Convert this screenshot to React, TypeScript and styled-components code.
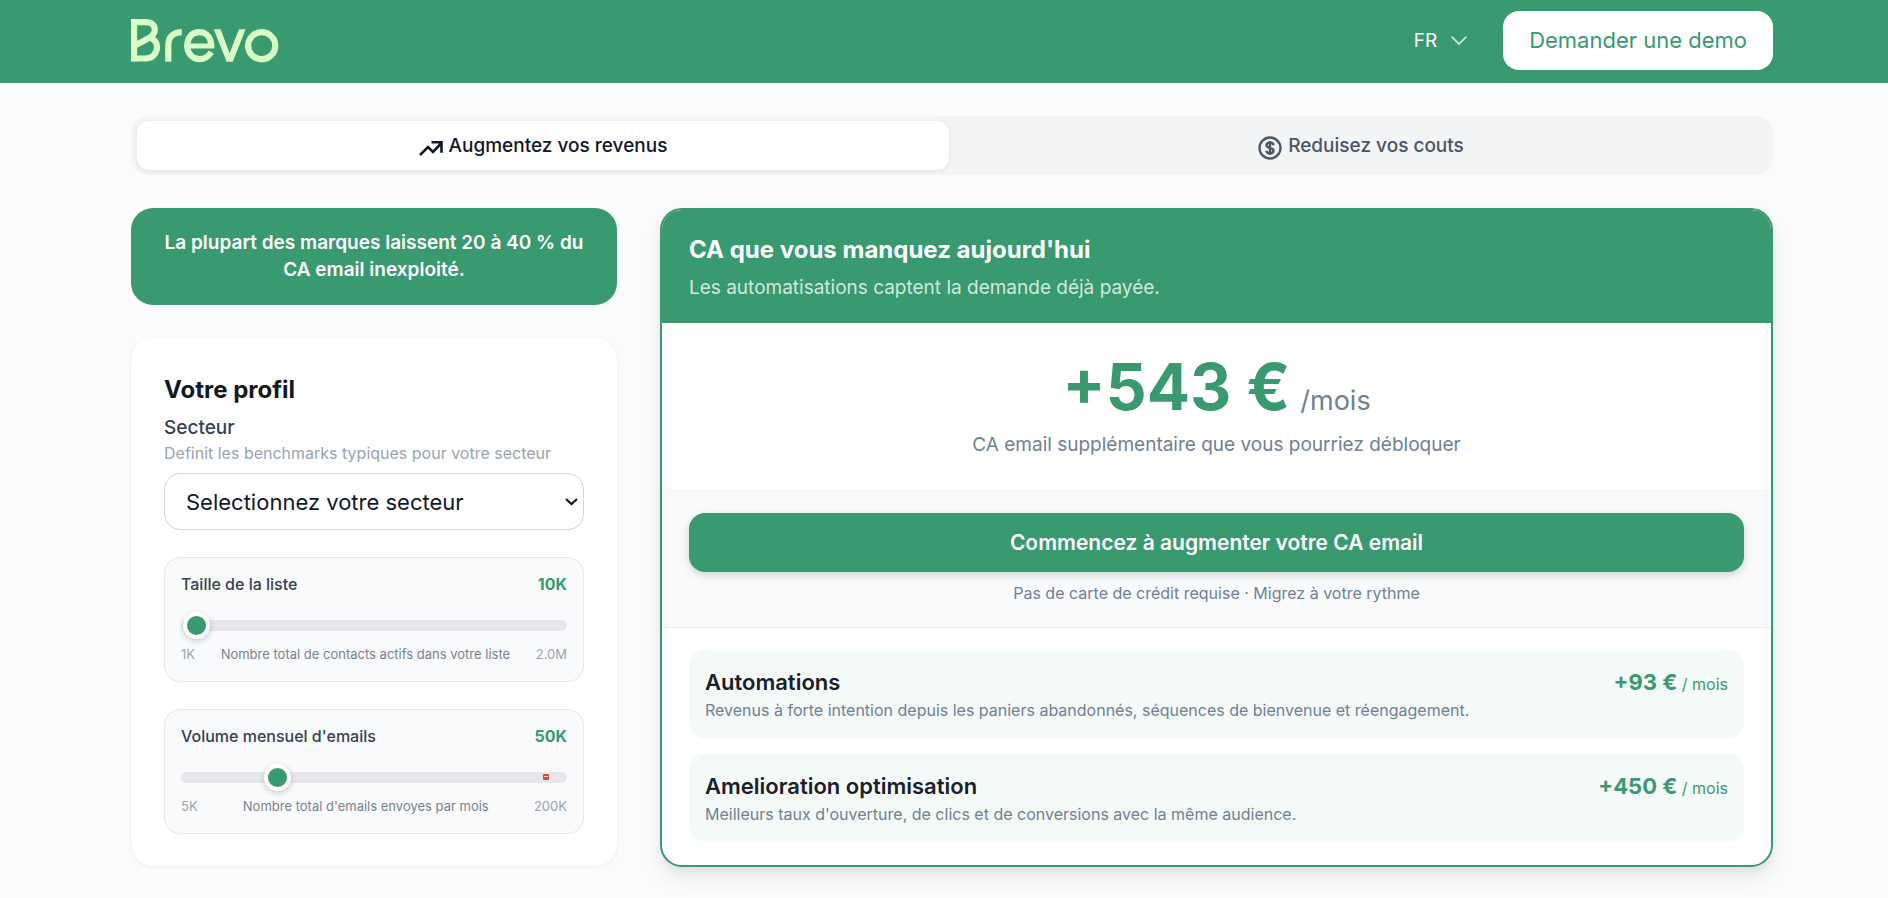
import React, { useState } from "react";
import styled, { createGlobalStyle } from "styled-components";

const green = "#39996f";

const GlobalStyle = createGlobalStyle`
  *, *::before, *::after { box-sizing: border-box; }
  body {
    margin: 0;
    background: #fafbfd;
    color: #111827;
    font-family: Inter, "Liberation Sans", sans-serif;
    font-size: 19px;
    line-height: 28px;
  }
  h1, h2, h3, p { margin: 0; }
  button, select, input { font-family: inherit; }
`;

const Header = styled.header`
  background: ${green};
  padding: 11px 115px 13px 131px;
  display: flex;
  align-items: center;
  justify-content: space-between;
`;

const HomeLink = styled.a`
  display: block;
  line-height: 0;
`;

const HeaderActions = styled.div`
  display: flex;
  align-items: center;
  gap: 36px;
`;

const LanguageButton = styled.button`
  display: flex;
  align-items: center;
  gap: 14px;
  border: 0;
  padding: 0;
  background: none;
  color: #fff;
  font-size: 19px;
  line-height: 28px;
  cursor: pointer;
`;

const DemoButton = styled.button`
  border: 0;
  border-radius: 16px;
  background: #fff;
  color: ${green};
  font-size: 22px;
  font-weight: 400;
  line-height: 31px;
  padding: 14px 26px;
  cursor: pointer;
`;

const Main = styled.main`
  padding: 33px 115px 31px 131px;
  display: grid;
  gap: 33px;
`;

const Tabs = styled.div`
  display: grid;
  grid-template-columns: 1fr 1fr;
  gap: 6px;
  padding: 5px 6px;
  border-radius: 16px;
  background: #f3f4f6;
`;

const Tab = styled.button<{ $active: boolean }>`
  display: flex;
  align-items: center;
  justify-content: center;
  gap: 6px;
  border: 0;
  border-radius: 12px;
  padding: 10px 16px;
  background: ${(p) => (p.$active ? "#fff" : "transparent")};
  box-shadow: ${(p) => (p.$active ? "0 1px 4px rgba(0, 0, 0, 0.08)" : "none")};
  color: ${(p) => (p.$active ? "#111827" : "#4b5563")};
  font-size: 19px;
  font-weight: 500;
  line-height: 29px;
  cursor: pointer;

  svg { margin-top: 4px; }
`;

const Columns = styled.div`
  display: grid;
  grid-template-columns: minmax(0, 486fr) minmax(0, 1113fr);
  gap: 43px;
  align-items: start;
`;

const Sidebar = styled.div`
  display: grid;
  gap: 33px;
`;

const Banner = styled.p`
  border-radius: 22px;
  background: ${green};
  color: #fff;
  padding: 21px 27px 22px;
  text-align: center;
  font-size: 19px;
  font-weight: 600;
  line-height: 27px;
`;

const ProfileCard = styled.section`
  border-radius: 22px;
  background: #fff;
  box-shadow: 0 1px 4px rgba(0, 0, 0, 0.06);
  padding: 34px 33px 32px;
  display: grid;
  gap: 27px;
`;

const Field = styled.div`
  display: flex;
  flex-direction: column;
`;

const ProfileTitle = styled.h2`
  font-size: 24px;
  font-weight: 700;
  line-height: 36px;
`;

const FieldLabel = styled.label`
  color: #374151;
  font-weight: 500;
  line-height: 26px;
  padding-top: 7px;
`;

const Hint = styled.p`
  color: #9ca3af;
  font-size: 16px;
  line-height: 24px;
`;

const SelectBox = styled.div`
  position: relative;
  margin-top: 8px;

  svg {
    position: absolute;
    right: 6px;
    top: 25px;
    pointer-events: none;
  }
`;

const Select = styled.select`
  display: block;
  appearance: none;
  height: 57px;
  width: 100%;
  border: 1px solid #d1d5db;
  border-radius: 16px;
  background: #fff;
  color: #111827;
  font-size: 22px;
  padding: 0 21px;
`;

const SliderCard = styled.div`
  border: 1px solid #e5e7eb;
  border-radius: 16px;
  background: #f9fafb;
  padding: 12px 16px 17px;
  display: grid;
`;

const Line = styled.div`
  display: flex;
  justify-content: space-between;
  align-items: center;
`;

const SliderLabel = styled.label`
  color: #374151;
  font-size: 16px;
  font-weight: 500;
  line-height: 28px;
`;

const SliderValue = styled.output`
  color: ${green};
  font-size: 16px;
  font-weight: 700;
  line-height: 28px;
`;

const Track = styled.div`
  position: relative;
  display: flex;
  margin-top: 14px;
`;

const Range = styled.input`
  appearance: none;
  width: 100%;
  height: 27px;
  margin: 0;
  background: none;

  &::-webkit-slider-runnable-track {
    height: 11px;
    border-radius: 6px;
    background: #e5e7eb;
  }
  &::-webkit-slider-thumb {
    appearance: none;
    width: 27px;
    height: 27px;
    margin-top: -8px;
    border: 4px solid #fff;
    border-radius: 50%;
    background: ${green};
    box-shadow: 0 2px 6px rgba(0, 0, 0, 0.2);
  }
`;

const Marker = styled.svg`
  position: absolute;
  right: 18px;
  top: 10px;
`;

const Scale = styled(Line)`
  color: #9ca3af;
  font-size: 13px;
  line-height: 20px;
  margin-top: 5px;
`;

const ScaleNote = styled.span`
  color: #7b818c;
`;

const ResultCard = styled.section`
  border: 2px solid ${green};
  border-radius: 22px;
  overflow: hidden;
  background: #fff;
  box-shadow: 0 12px 20px rgba(0, 0, 0, 0.07), 0 4px 8px rgba(0, 0, 0, 0.05);
`;

const ResultHeader = styled.div`
  background: ${green};
  color: #fff;
  padding: 21px 27px 17px;
`;

const ResultTitle = styled.h2`
  font-size: 24px;
  font-weight: 700;
  line-height: 38px;
`;

const ResultSubtitle = styled.p`
  color: #cfeadd;
  line-height: 37px;
`;

const Hero = styled.div`
  text-align: center;
  color: #718096;
  padding: 26px 27px 27px;
`;

const Amount = styled.div`
  display: flex;
  align-items: baseline;
  justify-content: center;
  gap: 10px;
`;

const AmountValue = styled.strong`
  color: ${green};
  font-size: 64px;
  font-weight: 700;
  line-height: 76px;
`;

const AmountUnit = styled.span`
  font-size: 27px;
  line-height: 28px;
`;

const HeroNote = styled.p`
  line-height: 36px;
  margin-top: 2px;
`;

const CallToAction = styled.div`
  border-top: 1px solid #f0f2f4;
  border-bottom: 1px solid #e9ecef;
  background: #f9fafb;
  padding: 22px 27px;
  text-align: center;
`;

const CtaButton = styled.button`
  width: 100%;
  border: 0;
  border-radius: 16px;
  background: ${green};
  color: #fff;
  box-shadow: 0 3px 8px rgba(0, 0, 0, 0.16);
  font-size: 21px;
  font-weight: 600;
  line-height: 31px;
  padding: 14px 27px;
  cursor: pointer;
`;

const CtaNote = styled.p`
  color: #718096;
  font-size: 16px;
  line-height: 24px;
  margin-top: 9px;
`;

const Breakdown = styled.div`
  padding: 22px 27px 23px;
  display: grid;
  gap: 16px;
`;

const BreakdownRow = styled.div`
  border-radius: 16px;
  background: #f4faf7;
  padding: 16px;
  display: flex;
  justify-content: space-between;
  align-items: flex-start;
`;

const RowTitle = styled.h3`
  color: #1a202c;
  font-size: 22px;
  font-weight: 600;
  line-height: 32px;
`;

const RowText = styled.p`
  color: #718096;
  font-size: 16px;
  line-height: 24px;
`;

const RowAmount = styled.p`
  color: ${green};
  font-size: 16px;
  line-height: 32px;
  white-space: nowrap;

  strong {
    font-size: 22px;
    font-weight: 700;
  }
`;

const Logo = () => (
  <svg width="148" height="44" viewBox="0 0 148 44" fill="none" stroke="#d9ffc4" strokeWidth="6.200" role="img" aria-label="Brevo">
    <path d="M3.100 42.500V3.200h12c6 0 8.700 3.500 8.700 7.600 0 5-4 7.700-9 9.900L3.100 27" />
    <path d="M19 18.500c4.500 2 7 5 7 9.300 0 6.500-4.500 11.700-11.500 11.700H3.100" />
    <path d="M37.300 42.700V26c0-8 5-12.800 13.500-12.800" />
    <path d="M56 27h27.300" strokeWidth="5" />
    <path d="M80.300 28c0-9-4.500-14.900-12-14.900S56.200 19 56.200 26.600 61.500 40.200 68.500 40.200c5 0 9-2.600 11.700-7.200" />
    <path d="M82.800 10.300h6.700l9.200 24 9.200-24h6.700L101.800 42.800h-6.200z" fill="#d9ffc4" stroke="none" />
    <circle cx="130.700" cy="26.700" r="13.600" />
  </svg>
);

const Chevron = () => (
  <svg width="16" height="10" viewBox="0 0 16 10" fill="none" stroke="#d6efe2" strokeWidth="1.600" strokeLinecap="round" aria-hidden="true">
    <path d="M1 1l7 7 7-7" />
  </svg>
);

const SelectArrow = () => (
  <svg width="13" height="8" viewBox="0 0 13 8" fill="none" stroke="#111827" strokeWidth="2.200" aria-hidden="true">
    <path d="M1 1l5.500 5L12 1" />
  </svg>
);

const TrendIcon = () => (
  <svg width="24" height="16" viewBox="0 0 24 16" fill="none" stroke="currentColor" strokeWidth="2.600" aria-hidden="true">
    <path d="M1 15l8-8 5 5 8.500-9M12.500 2.300h10v10.500" />
  </svg>
);

const DollarIcon = () => (
  <svg width="24" height="24" viewBox="0 0 24 24" fill="none" stroke="currentColor" strokeWidth="2.300" aria-hidden="true">
    <circle cx="12" cy="12" r="10.500" />
    <path d="M15.500 9.300c0-1.500-1.500-2.500-3.500-2.500S8.500 7.800 8.500 9.300c0 3.700 7 1.700 7 5.400 0 1.500-1.500 2.500-3.500 2.500s-3.500-1-3.500-2.500M12 5v14" strokeWidth="2.400" />
  </svg>
);

type SliderProps = {
  id: string;
  label: string;
  note: string;
  min: number;
  max: number;
  initial: number;
  low: string;
  high: string;
  format: (value: number) => string;
  marked?: boolean;
};

const Slider = ({ id, label, note, min, max, initial, low, high, format, marked }: SliderProps) => {
  const [value, setValue] = useState(initial);
  return (
    <SliderCard>
      <Line>
        <SliderLabel htmlFor={id}>{label}</SliderLabel>
        <SliderValue htmlFor={id}>{format(value)}</SliderValue>
      </Line>
      <Track>
        <Range id={id} type="range" min={min} max={max} value={value} onChange={(e) => setValue(Number(e.target.value))} />
        {marked && (
          <Marker width="6" height="6" viewBox="0 0 6 6" aria-hidden="true">
            <rect width="6" height="6" rx="1" fill="#d9453d" />
            <rect x="1" y="2" width="4" height="1" fill="#f6cfcd" />
          </Marker>
        )}
      </Track>
      <Scale>
        <span>{low}</span>
        <ScaleNote>{note}</ScaleNote>
        <span>{high}</span>
      </Scale>
    </SliderCard>
  );
};

const thousands = (value: number) => `${value}K`;

const gains = [
  {
    title: "Automations",
    text: "Revenus à forte intention depuis les paniers abandonnés, séquences de bienvenue et réengagement.",
    amount: "+93 €",
  },
  {
    title: "Amelioration optimisation",
    text: "Meilleurs taux d'ouverture, de clics et de conversions avec la même audience.",
    amount: "+450 €",
  },
];

export default function App() {
  const [tab, setTab] = useState("revenue");
  return (
    <>
      <GlobalStyle />
      <Header>
        <HomeLink href="#"><Logo /></HomeLink>
        <HeaderActions>
          <LanguageButton>FR <Chevron /></LanguageButton>
          <DemoButton>Demander une demo</DemoButton>
        </HeaderActions>
      </Header>
      <Main>
        <Tabs role="tablist">
          <Tab role="tab" aria-selected={tab === "revenue"} $active={tab === "revenue"} onClick={() => setTab("revenue")}>
            <TrendIcon />Augmentez vos revenus
          </Tab>
          <Tab role="tab" aria-selected={tab === "costs"} $active={tab === "costs"} onClick={() => setTab("costs")}>
            <DollarIcon />Reduisez vos couts
          </Tab>
        </Tabs>
        <Columns>
          <Sidebar>
            <Banner>La plupart des marques laissent 20 à 40 % du CA email inexploité.</Banner>
            <ProfileCard>
              <Field>
                <ProfileTitle>Votre profil</ProfileTitle>
                <FieldLabel htmlFor="sector">Secteur</FieldLabel>
                <Hint>Definit les benchmarks typiques pour votre secteur</Hint>
                <SelectBox>
                  <Select id="sector" defaultValue="">
                    <option value="">Selectionnez votre secteur</option>
                  </Select>
                  <SelectArrow />
                </SelectBox>
              </Field>
              <Slider id="contacts" label="Taille de la liste" note="Nombre total de contacts actifs dans votre liste" min={1} max={2000} initial={10} low="1K" high="2.0M" format={thousands} />
              <Slider id="volume" label="Volume mensuel d'emails" note="Nombre total d'emails envoyes par mois" min={5} max={200} initial={50} low="5K" high="200K" format={thousands} marked />
            </ProfileCard>
          </Sidebar>
          <ResultCard>
            <ResultHeader>
              <ResultTitle>CA que vous manquez aujourd'hui</ResultTitle>
              <ResultSubtitle>Les automatisations captent la demande déjà payée.</ResultSubtitle>
            </ResultHeader>
            <Hero>
              <Amount>
                <AmountValue>+543 €</AmountValue>
                <AmountUnit>/mois</AmountUnit>
              </Amount>
              <HeroNote>CA email supplémentaire que vous pourriez débloquer</HeroNote>
            </Hero>
            <CallToAction>
              <CtaButton>Commencez à augmenter votre CA email</CtaButton>
              <CtaNote>Pas de carte de crédit requise · Migrez à votre rythme</CtaNote>
            </CallToAction>
            <Breakdown>
              {gains.map((gain) => (
                <BreakdownRow key={gain.title}>
                  <div>
                    <RowTitle>{gain.title}</RowTitle>
                    <RowText>{gain.text}</RowText>
                  </div>
                  <RowAmount><strong>{gain.amount}</strong> / mois</RowAmount>
                </BreakdownRow>
              ))}
            </Breakdown>
          </ResultCard>
        </Columns>
      </Main>
    </>
  );
}
